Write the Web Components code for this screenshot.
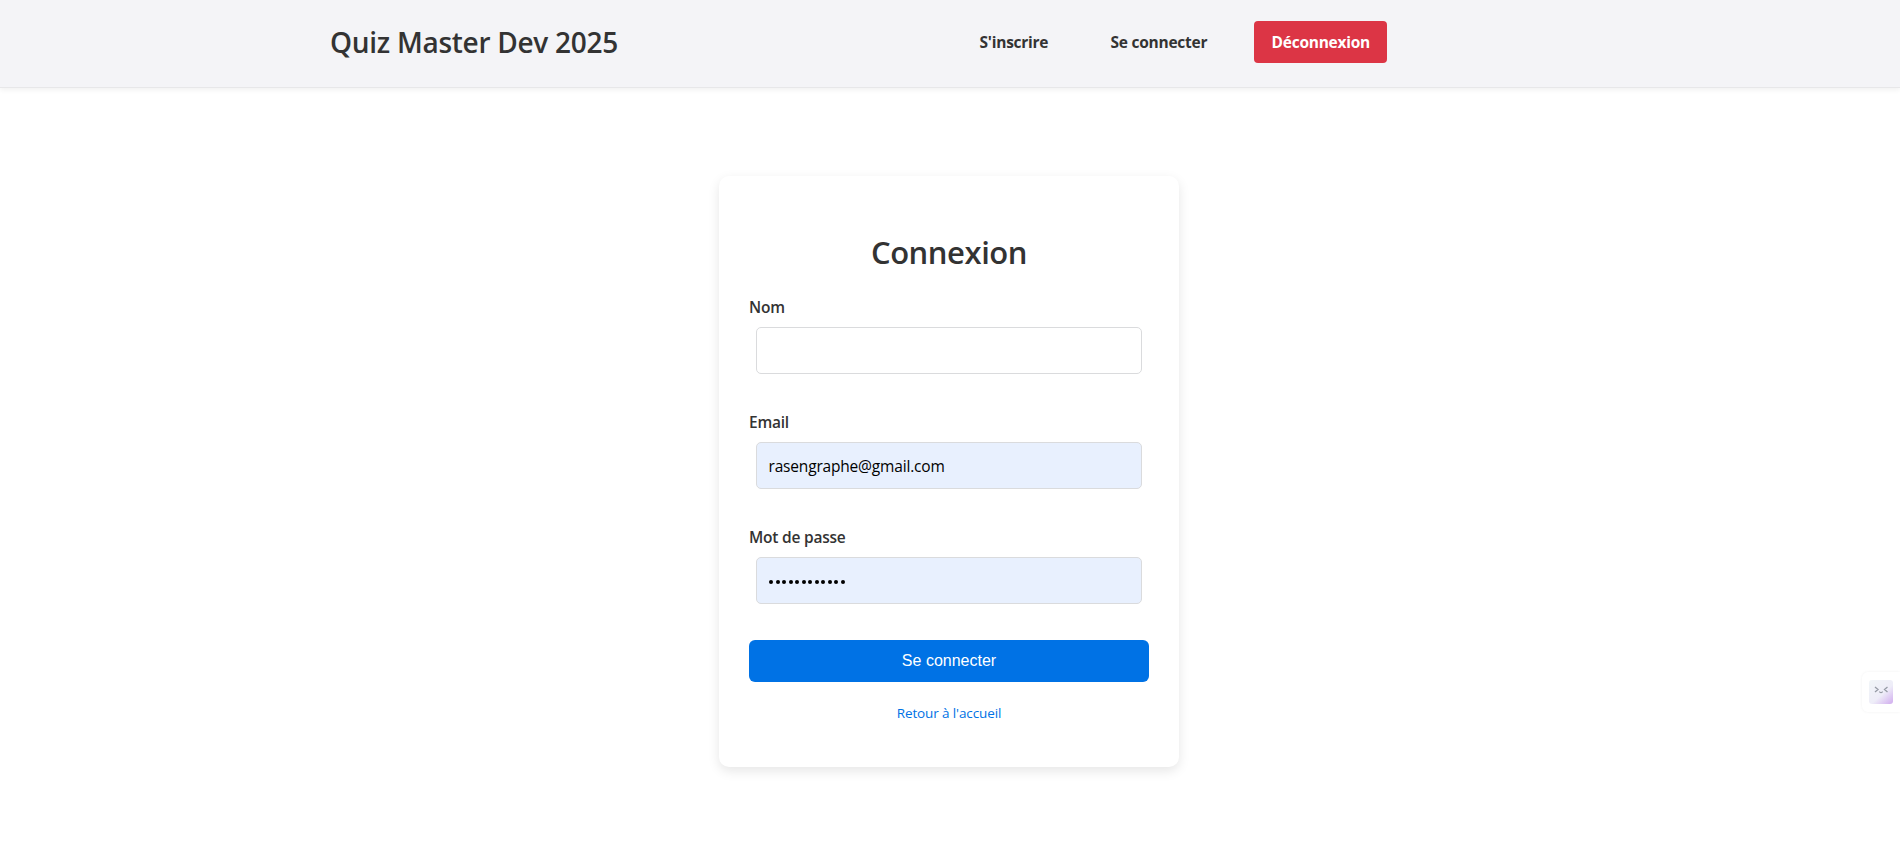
<!DOCTYPE html>
<html lang="fr">
<head>
<meta charset="utf-8">
<title>Quiz Master Dev 2025</title>
<style>
  html, body { margin: 0; height: 100%; }
  body { background: #fff; color: #333; font-family: "Open Sans", "Noto Sans", sans-serif; font-size: 16px; overflow: hidden; }
</style>
</head>
<body>
<quiz-app></quiz-app>
<script>
const define = (name, html) => customElements.define(name, class extends HTMLElement {
  constructor() {
    super();
    this.attachShadow({ mode: 'open' }).innerHTML = html;
  }
});

define('nav-link', `
<style>
  :host { display: block; }
  a { display: block; box-sizing: border-box; height: 42px; padding: 0 17.6px; border-radius: 4px; color: #333;
      font-size: 15.5px; font-weight: 700; line-height: 42px; letter-spacing: var(--track); text-decoration: none; white-space: nowrap; }
  :host([danger]) a { background: #dc3545; color: #fff; }
</style>
<a href="#"><slot></slot></a>`);

define('site-header', `
<style>
  :host { display: block; box-sizing: border-box; height: 88px; background: #f4f4f7; border-bottom: 1px solid #e7e7e9; box-shadow: 0 2px 5px rgba(0,0,0,.06); }
  .bar { display: flex; justify-content: space-between; align-items: flex-start; width: 1057px; margin-left: 330px; padding-top: 21px; }
  h1 { margin: 0; font-size: 28px; font-weight: 600; line-height: 42px; letter-spacing: -.28px; white-space: nowrap; }
  nav { display: flex; }
  nav-link { --track: -.26px; }
  nav-link:nth-child(1) { width: 131px; }
  nav-link:nth-child(2) { width: 161px; }
  nav-link:nth-child(3) { width: 133px; }
</style>
<div class="bar">
  <h1>Quiz Master Dev 2025</h1>
  <nav>
    <nav-link>S'inscrire</nav-link>
    <nav-link>Se connecter</nav-link>
    <nav-link danger>Déconnexion</nav-link>
  </nav>
</div>`);

customElements.define('form-field', class extends HTMLElement {
  connectedCallback() {
    const root = this.attachShadow({ mode: 'open' });
    root.innerHTML = `
<style>
  :host { display: block; height: 115px; }
  label { display: block; height: 32px; font-size: 15.5px; font-weight: 600; line-height: 24px; letter-spacing: -.22px; }
  .box { display: flex; align-items: center; box-sizing: border-box; width: 386px; height: 47px; margin-left: 7px; padding: 0 11.5px;
         border: 1px solid #dadbdd; border-radius: 5px; background: #fff; color: #000; font-size: 15.5px; letter-spacing: -.18px; }
  :host([filled]) .box { background: #e8f0fe; }
  .dots { display: flex; gap: 2.5px; padding: 2px .5px 0; }
  .dots i { width: 4px; height: 4px; border-radius: 50%; background: #000; }
</style>
<label></label><div class="box"><slot></slot></div>`;
    root.querySelector('label').textContent = this.getAttribute('label');
    const n = +this.getAttribute('dots');
    if (n) root.querySelector('.box').innerHTML = '<span class="dots">' + '<i></i>'.repeat(n) + '</span>';
  }
});

define('login-card', `
<style>
  :host { display: block; box-sizing: border-box; width: 460px; height: 591px; padding: 52px 30px 0; border-radius: 10px; background: #fff; box-shadow: 0 4px 12px rgba(0,0,0,.1); }
  h2 { margin: 0 0 19px; font-size: 31px; font-weight: 600; line-height: 48px; text-align: center; letter-spacing: -.45px; }
  .fields { height: 345px; }
  button { display: block; width: 400px; height: 42px; margin: 0; padding: 0 0 1px; border: 0; border-radius: 6px; background: #0072e5; color: #fff;
           font: 16px/40px "Liberation Sans", Arial, sans-serif; }
  a { display: block; margin-top: 19px; color: #0072e5; font-size: 13.5px; line-height: 24px; letter-spacing: -.12px; text-align: center; text-decoration: none; }
</style>
<h2>Connexion</h2>
<div class="fields">
  <form-field label="Nom"></form-field>
  <form-field label="Email" filled>rasengraphe@gmail.com</form-field>
  <form-field label="Mot de passe" filled dots="12"></form-field>
</div>
<button type="button">Se connecter</button>
<a href="#">Retour à l'accueil</a>`);

define('side-widget', `
<style>
  :host { position: absolute; right: 0; top: 672px; display: flex; align-items: center; box-sizing: border-box; width: 38px; height: 40px; padding-left: 7px;
          background: #fff; border-radius: 6px 0 0 6px; box-shadow: 0 0 3px rgba(0,0,0,.06); }
</style>
<svg width="24" height="24" viewBox="0 0 24 24">
  <defs><linearGradient id="g" x1="0.1" y1="0" x2="1" y2="1"><stop offset="0" stop-color="#f1f5f8"/><stop offset=".55" stop-color="#eeedf8"/><stop offset="1" stop-color="#d0abee"/></linearGradient></defs>
  <rect width="24" height="24" rx="3" fill="url(#g)"/>
  <path d="M6 7l3 2.500L6 12M18.500 7l-3 2.500 3 2.500M10.500 11.500q.2 1.200 1.500 1.200t1.500-1.200" fill="none" stroke="#969ba5" stroke-width="1.300"/>
</svg>`);

define('quiz-app', `
<style>
  :host { display: block; position: relative; height: 856px; }
  main { display: flex; justify-content: center; padding: 88px 2px 0 0; }
</style>
<site-header></site-header>
<main><login-card></login-card></main>
<side-widget></side-widget>`);
</script>
</body>
</html>
